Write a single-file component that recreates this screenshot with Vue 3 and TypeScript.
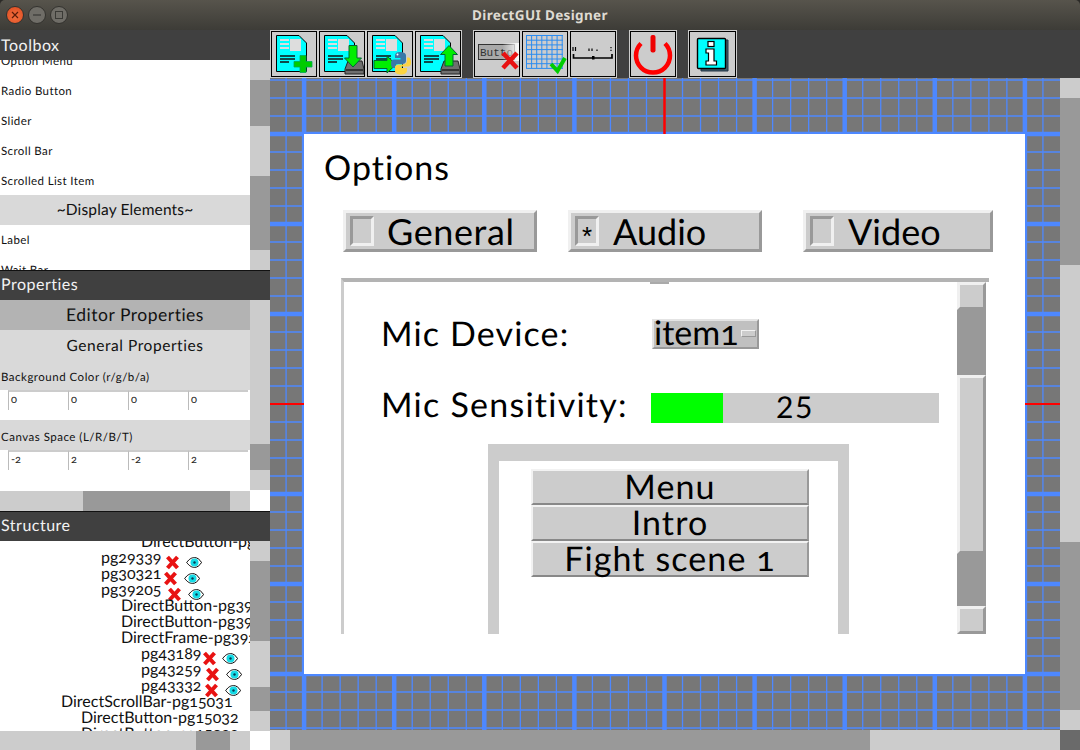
<script setup lang="ts">
const toolboxRows = ['Option Menu', 'Radio Button', 'Slider', 'Scroll Bar', 'Scrolled List Item']
const fields = [
  { label: 'Background Color (r/g/b/a)', values: ['0', '0', '0', '0'] },
  { label: 'Canvas Space (L/R/B/T)', values: ['-2', '2', '-2', '2'] },
]
interface TreeRow { indent: number; name: string; nameW?: number; eyeGap?: number }
const tree: TreeRow[] = [
  { indent: 141, name: 'DirectButton-pg29338' },
  { indent: 101, name: 'pg29339', nameW: 64, eyeGap: 6 },
  { indent: 101, name: 'pg30321', nameW: 62, eyeGap: 6 },
  { indent: 101, name: 'pg39205', nameW: 66, eyeGap: 6 },
  { indent: 121, name: 'DirectButton-pg39206' },
  { indent: 121, name: 'DirectButton-pg39207' },
  { indent: 121, name: 'DirectFrame-pg39208' },
  { indent: 141, name: 'pg43189', nameW: 61, eyeGap: 5 },
  { indent: 141, name: 'pg43259', nameW: 64, eyeGap: 6 },
  { indent: 141, name: 'pg43332', nameW: 63, eyeGap: 6 },
  { indent: 61, name: 'DirectScrollBar-pg15031' },
  { indent: 81, name: 'DirectButton-pg15032' },
  { indent: 81, name: 'DirectButton-pg15033' },
]
const seg = (list: [number, string][]) => list.map(([size, tone]) => ({ size, tone }))
const toolboxV = seg([[20, 'l'], [46, 'd'], [50, 'l'], [74, 'd'], [20, 'l'], [30, 'l']])
const propsV = seg([[144, 'l'], [26, 'd'], [20, 'l']])
const propsH = seg([[83, 'l'], [147, 'd'], [20, 'l']])
const structV = seg([[20, 'l'], [80, 'd'], [46, 'l'], [24, 'd'], [20, 'l']])
const structH = seg([[196, 'l'], [34, 'd'], [20, 'l']])
const canvasV = seg([[20, 'l'], [167, 'd'], [277, 'l'], [168, 'd'], [20, 'l']])
const canvasH = seg([[20, 'l'], [580, 'd'], [190, 'l']])

const CX = 394.5
const CY = 326
const STEP_X = 90.1 / 5
const STEP_Y = 18
const vLines: { x: number; major: boolean }[] = []
const hLines: { y: number; major: boolean }[] = []
for (let i = -30; i <= 30; i++) {
  const x = CX + i * STEP_X
  if (x >= 0 && x <= 790 && i !== 0) vLines.push({ x, major: i % 5 === 0 })
  const y = CY + i * STEP_Y
  if (y >= 0 && y <= 652 && i !== 0) hLines.push({ y, major: i % 5 === 0 })
}
const gridIcon = Array.from({ length: 8 }, (_, i) => i)
</script>

<template>
  <div class="win">
    <header class="titlebar">
      <div class="lights">
        <span class="light close"><svg width="8" height="8" viewBox="0 0 8 8"><path d="M1 1 7 7M7 1 1 7" stroke="#5b1c08" stroke-width="1.2" /></svg></span>
        <span class="light"><svg width="8" height="8" viewBox="0 0 8 8"><path d="M0 4H8" stroke="#3a3a36" stroke-width="1.2" /></svg></span>
        <span class="light"><svg width="8" height="8" viewBox="0 0 8 8"><rect x=".5" y=".5" width="7" height="7" fill="none" stroke="#3a3a36" /></svg></span>
      </div>
      <div class="title">DirectGUI Designer</div>
    </header>

    <div class="body">
      <aside class="left">
        <section class="panel">
          <div class="phead">Toolbox</div>
          <div class="pmain">
            <div class="plist toolbox">
              <div v-for="r in toolboxRows" :key="r" class="tbrow">{{ r }}</div>
              <div class="section">~Display Elements~</div>
              <div class="tbrow">Label</div>
              <div class="tbrow">Wait Bar</div>
            </div>
            <div class="vbar">
              <div v-for="(s, i) in toolboxV" :key="i" :class="s.tone" :style="{ height: s.size + 'px' }"></div>
            </div>
          </div>
        </section>

        <section class="panel props">
          <div class="phead">Properties</div>
          <div class="pmain">
            <div class="plist">
              <div class="editor">Editor Properties</div>
              <div class="general">General Properties</div>
              <div v-for="f in fields" :key="f.label" class="field">
                <div class="flabel">{{ f.label }}</div>
                <div class="inputs">
                  <div v-for="(v, i) in f.values" :key="i" class="input">{{ v }}</div>
                </div>
              </div>
            </div>
            <div class="vbar">
              <div v-for="(s, i) in propsV" :key="i" :class="s.tone" :style="{ height: s.size + 'px' }"></div>
            </div>
          </div>
          <div class="hrow">
            <div class="hbar">
              <div v-for="(s, i) in propsH" :key="i" :class="s.tone" :style="{ width: s.size + 'px' }"></div>
            </div>
          </div>
        </section>

        <section class="panel">
          <div class="phead">Structure</div>
          <div class="pmain">
            <div class="plist tree">
              <div v-for="r in tree" :key="r.name" class="trow" :style="{ paddingLeft: r.indent + 'px' }">
                <span class="tname" :style="r.nameW ? { width: r.nameW + 'px' } : undefined">{{ r.name }}</span>
                <template v-if="r.nameW">
                  <svg class="xicon" width="15" height="15" viewBox="0 0 15 15"><path d="M2.5 2 12.5 13M12.5 2 2.5 13" stroke="#e81212" stroke-width="4" /></svg>
                  <svg class="eye" :style="{ marginLeft: r.eyeGap + 'px' }" width="16" height="11" viewBox="0 0 16 11">
                    <path d="M.7 5.5C3.5 1.6 6 .6 8.5.6c2.600 0 5 1.500 7 4.900-2 3.300-4.400 4.900-7 4.900-2.500 0-5-1.200-7.800-4.900Z" fill="#fff" stroke="#000" stroke-width="1" />
                    <circle cx="8.500" cy="5.500" r="4" fill="#14dbe6" />
                    <circle cx="8.500" cy="5.500" r="1.200" fill="#063a55" />
                  </svg>
                </template>
              </div>
            </div>
            <div class="vbar">
              <div v-for="(s, i) in structV" :key="i" :class="s.tone" :style="{ height: s.size + 'px' }"></div>
            </div>
          </div>
          <div class="hrow">
            <div class="hbar">
              <div v-for="(s, i) in structH" :key="i" :class="s.tone" :style="{ width: s.size + 'px' }"></div>
            </div>
          </div>
        </section>
      </aside>

      <main class="main">
        <div class="toolbar">
          <button class="tool">
            <svg viewBox="0 0 46 46" width="46" height="46">
              <path d="M5.500 4.500H28L35.500 12V40.500H5.500Z" fill="#0ff" stroke="#000" /><path d="M9 9h9M9 13h9M9 17h9" stroke="#ddd" stroke-width="2" /><rect x="19" y="8" width="11" height="12" fill="#ddd" /><path d="M9 25h15M9 28h15M9 31h9" stroke="#111" stroke-width="1.500" />
              <path d="M29 24.500h6v6h6v5.500h-6v5.500h-6V36h-6v-5.500h6Z" fill="#0c0" stroke="#0a5" stroke-width=".8" />
            </svg>
          </button>
          <button class="tool">
            <svg viewBox="0 0 46 46" width="46" height="46">
              <path d="M5.500 4.500H28L35.500 12V40.500H5.500Z" fill="#0ff" stroke="#000" /><path d="M9 9h9M9 13h9M9 17h9" stroke="#ddd" stroke-width="2" /><rect x="19" y="8" width="11" height="12" fill="#ddd" /><path d="M9 25h15M9 28h15M9 31h9" stroke="#111" stroke-width="1.500" />
              <path d="M29 30h14l2 8v5H26v-5Z" fill="#6f6f6f" stroke="#222" /><path d="M27 39h17" stroke="#222" stroke-width="1.500" />
              <path d="M30 14.500h8V27h4.500L34 36 25.500 27H30Z" fill="#0e0" stroke="#063" />
            </svg>
          </button>
          <button class="tool">
            <svg viewBox="0 0 46 46" width="46" height="46">
              <path d="M5.500 4.500H28L35.500 12V40.500H5.500Z" fill="#0ff" stroke="#000" /><path d="M9 9h9M9 13h9M9 17h9" stroke="#ddd" stroke-width="2" /><rect x="19" y="8" width="11" height="12" fill="#ddd" /><path d="M9 25h15M9 28h15M9 31h9" stroke="#111" stroke-width="1.500" />
              <path d="M7 29.500H20V25l9 8.500-9 8.500v-4.500H7Z" fill="#0e0" stroke="#063" />
              <path d="M33 21c4 0 6 1.300 6 3.500V30c0 2-1.700 3-3.500 3H31c-2 0-3 1.300-3 3v1h-2c-1.700-1-2-3-2-4.500 0-2.500 1-4 3-4h6.500V27H28v-2.500c0-2.400 2-3.500 5-3.500Z" fill="#3b78a8" />
              <circle cx="30.500" cy="23.500" r="1" fill="#fff" />
              <path d="M40 26.500h2c1.700 1 2 3 2 5 0 2.500-1 4-3 4h-6.500V37H40v2.500c0 2.500-2.500 4-6 4-3.500 0-6-1.400-6-3.500v-3.500c0-2 1.700-3 3.500-3H36c2 0 4-1.300 4-3.500Z" fill="#fcd340" />
            </svg>
          </button>
          <button class="tool">
            <svg viewBox="0 0 46 46" width="46" height="46">
              <path d="M5.500 4.500H28L35.500 12V40.500H5.500Z" fill="#0ff" stroke="#000" /><path d="M9 9h9M9 13h9M9 17h9" stroke="#ddd" stroke-width="2" /><rect x="19" y="8" width="11" height="12" fill="#ddd" /><path d="M9 25h15M9 28h15M9 31h9" stroke="#111" stroke-width="1.500" />
              <path d="M29 30h14l2 8v5H26v-5Z" fill="#6f6f6f" stroke="#222" /><path d="M27 39h17" stroke="#222" stroke-width="1.500" />
              <path d="M34 14.500 42.500 23.500H38V35H30V23.500H25.500Z" fill="#0e0" stroke="#063" />
            </svg>
          </button>

          <button class="tool gap-a">
            <svg viewBox="0 0 46 46" width="46" height="46">
              <defs><linearGradient id="fade"><stop offset=".45" stop-color="#fff" stop-opacity="0" /><stop offset="1" stop-color="#fff" /></linearGradient></defs>
              <rect x="4.500" y="13.500" width="36" height="15" fill="#a9a9a9" stroke="#333" />
              <text x="6" y="25" class="btn-word">Butto</text>
              <rect x="14" y="12" width="32" height="18" fill="url(#fade)" />
              <path d="M29 22 43 37M43 22 29 37" stroke="#e81212" stroke-width="4.500" />
            </svg>
          </button>
          <button class="tool">
            <svg viewBox="0 0 46 46" width="46" height="46">
              <path v-for="i in gridIcon" :key="'v' + i" :d="`M${4.500 + i * 5.100} 4V37`" stroke="#2a8cf0" stroke-width="1" />
              <path v-for="i in gridIcon" :key="'h' + i" :d="`M4 ${4.500 + i * 4.700}H41`" stroke="#2a8cf0" stroke-width="1" />
              <path d="M29 33 35.500 40 43 27" fill="none" stroke="#0c0" stroke-width="4" />
            </svg>
          </button>
          <button class="tool">
            <svg viewBox="0 0 46 46" width="46" height="46">
              <path d="M3.500 23V27H42V23" fill="none" stroke="#000" stroke-width="1.700" />
              <path d="M3 16V20M5.500 16V20M19 17.500V20M22 17.500V20M27 18.500V20M41 16V17.200M41 18.800V20" fill="none" stroke="#000" stroke-width="1.200" />
              <rect x="22" y="25" width="2.500" height="3.500" fill="#000" />
            </svg>
          </button>

          <button class="tool gap-b">
            <svg viewBox="0 0 46 46" width="46" height="46">
              <path d="M11 12.500A17 17 0 1 0 35 12.500" fill="none" stroke="#f00" stroke-width="4.500" />
              <rect x="20.500" y="4" width="5" height="17.500" rx="2" fill="#e00" />
            </svg>
          </button>
          <button class="tool gap-c">
            <svg viewBox="0 0 47 46" width="47" height="46">
              <path d="M36 9h3v31H12v-3" fill="#3d5a66" stroke="#234" />
              <rect x="8.500" y="7.500" width="28" height="30" rx="1" fill="#0ff" stroke="#000" stroke-width="1.400" />
              <rect x="19" y="10.500" width="6" height="5" fill="#fff" stroke="#000" stroke-width="1.200" />
              <path d="M17 18h8v12h2.500v4H17v-4h2.500v-8H17Z" fill="#fff" stroke="#000" stroke-width="1.200" />
            </svg>
          </button>
        </div>

        <div class="workspace">
          <div class="stage-row">
            <div class="canvas">
              <svg class="grid" width="790" height="652" viewBox="0 0 790 652">
                <line v-for="l in vLines" :key="'v' + l.x" :x1="l.x" :x2="l.x" y1="0" y2="652" stroke="#4d88ff" :stroke-width="l.major ? 4.500 : 1.300" />
                <line v-for="l in hLines" :key="'h' + l.y" x1="0" x2="790" :y1="l.y" :y2="l.y" stroke="#4d88ff" :stroke-width="l.major ? 4.500 : 1.300" />
                <line :x1="CX" :x2="CX" y1="0" y2="56" stroke="#f00" stroke-width="2.500" />
                <line :x1="CX" :x2="CX" y1="596" y2="652" stroke="#4d88ff" stroke-width="4.500" />
                <line x1="0" x2="790" :y1="CY" :y2="CY" stroke="#f00" stroke-width="2" />
              </svg>

              <div class="frame">
                <div class="options">Options</div>
                <div class="tab tab-general"><span class="radio"></span><span class="gen">General</span></div>
                <div class="tab tab-audio"><span class="radio on">*</span><span>Audio</span></div>
                <div class="tab tab-video"><span class="radio"></span><span>Video</span></div>

                <div class="scroller">
                  <div class="nub"></div>
                  <div class="mic mic-device">Mic Device:</div>
                  <div class="optmenu">item1<span class="optind"></span></div>
                  <div class="mic mic-sens">Mic Sensitivity:</div>
                  <div class="meter"><div class="meter-fill"></div><span class="meter-val">25</span></div>

                  <div class="inner">
                    <div class="list">
                      <div class="lbtn">Menu</div>
                      <div class="lbtn">Intro</div>
                      <div class="lbtn">Fight scene 1</div>
                    </div>
                  </div>

                  <div class="sb">
                    <div class="sb-btn"></div>
                    <div class="sb-track t1"></div>
                    <div class="sb-btn thumb"></div>
                    <div class="sb-track t2"></div>
                    <div class="sb-btn"></div>
                  </div>
                </div>
              </div>
            </div>
            <div class="vbar">
              <div v-for="(s, i) in canvasV" :key="i" :class="s.tone" :style="{ height: s.size + 'px' }"></div>
            </div>
          </div>
          <div class="bottom-row">
            <div class="hbar">
              <div v-for="(s, i) in canvasH" :key="i" :class="s.tone" :style="{ width: s.size + 'px' }"></div>
            </div>
            <div class="corner"></div>
          </div>
        </div>
      </main>
    </div>
  </div>
</template>

<style>
html, body { margin: 0; background: #2b2a27; overflow: hidden; }
</style>

<style scoped>
.win {
  width: 1080px; height: 750px; display: flex; flex-direction: column; overflow: hidden;
  font-family: Lato, "Noto Sans", sans-serif; color: #111;
  font-variant-numeric: oldstyle-nums; text-rendering: geometricPrecision;
}
.titlebar {
  height: 30px; flex: none; display: flex; align-items: center; position: relative;
  background: linear-gradient(#57544c, #3d3c37); border-radius: 5px 5px 0 0;
}
.lights { display: flex; gap: 4px; padding-left: 6px; }
.light {
  width: 16px; height: 16px; border-radius: 50%; display: flex; align-items: center; justify-content: center;
  background: #6f6d67; border: 1px solid #33322e;
}
.light.close { background: radial-gradient(circle at 50% 60%, #f2703f, #dd4a1f); }
.title {
  position: absolute; left: 0; right: 0; text-align: center;
  font: 700 13.500px "Noto Sans", sans-serif; color: #dfdbd2; letter-spacing: .35px;
}
.body { flex: 1; display: flex; min-height: 0; }
.left { width: 270px; flex: none; display: flex; flex-direction: column; background: #fff; }
.panel { height: 240px; flex: none; display: flex; flex-direction: column; overflow: hidden; }
.props { height: 241px; }
.phead {
  height: 30px; flex: none; box-sizing: border-box; background: #404040; color: #f2f2f2;
  font-size: 16px; line-height: 28px; padding-left: 1px; border-top: 1px solid #111; letter-spacing: .5px;
}
.panel:first-child .phead { border-top: none; line-height: 32px; }
.pmain { flex: 1; display: flex; min-height: 0; position: relative; }
.plist { width: 250px; flex: none; overflow: hidden; background: #fff; }
.vbar { width: 20px; flex: none; display: flex; flex-direction: column; overflow: hidden; }
.hrow { display: flex; height: 20px; flex: none; }
.hbar { display: flex; height: 20px; flex: 1; }
.l { background: #ccc; flex: none; }
.d { background: #999; flex: none; }
.tbrow { height: 30px; line-height: 32px; font-size: 11.500px; padding-left: 1px; white-space: nowrap; letter-spacing: .4px; }
.toolbox .tbrow:first-child { margin-top: -14px; }
.section { height: 30px; margin-top: -1px; background: #d9d9d9; text-align: center; line-height: 31px; font-size: 15.500px; letter-spacing: .15px; }
.editor, .general { height: 30px; line-height: 30px; text-align: center; padding-left: 20px; white-space: nowrap; }
.editor { background: #b3b3b3; font-size: 17.500px; letter-spacing: .5px; line-height: 29px; }
.general { background: #d9d9d9; font-size: 15.500px; letter-spacing: .55px; line-height: 32px; }
.field { height: 60px; }
.flabel { height: 30px; line-height: 35px; background: #d9d9d9; font-size: 11.500px; padding-left: 1px; white-space: nowrap; letter-spacing: .5px; }
.inputs { display: flex; padding-left: 8px; height: 30px; }
.input {
  width: 59px; height: 18px; box-sizing: content-box; border-top: 2px solid #ccc; border-left: 1px solid #bbb;
  font-size: 11px; line-height: 16px; text-indent: 2px; color: #222;
}
.trow { height: 16px; display: flex; align-items: flex-start; font-size: 16px; line-height: 16px; white-space: nowrap; }
.trow:first-child { margin-top: -7px; }
.tname { flex: none; display: block; }
.xicon { flex: none; margin-top: 5px; }
.eye { flex: none; margin-top: 7px; }

.main { width: 810px; flex: none; display: flex; flex-direction: column; }
.toolbar { height: 48px; flex: none; display: flex; background: #404040; }
.tool {
  width: 48px; height: 48px; flex: none; padding: 0; margin: 0; box-sizing: border-box;
  background: #ccc; border: 1px solid #ccc; position: relative;
  display: flex; align-items: center; justify-content: center;
}
.tool::after { content: ""; position: absolute; inset: 0; border: 1px solid #000; pointer-events: none; }
.tool svg { display: block; flex: none; }
.gap-a { margin-left: 11px; }
.gap-b { margin-left: 12px; }
.gap-c { margin-left: 11px; width: 49px; }
.btn-word { font-size: 11px; fill: #333; font-family: "Liberation Mono", monospace; }

.workspace { flex: 1; display: flex; flex-direction: column; min-height: 0; }
.stage-row { height: 652px; display: flex; flex: none; }
.canvas { width: 790px; height: 652px; flex: none; position: relative; background: #777; overflow: hidden; }
.grid { position: absolute; inset: 0; display: block; }
.bottom-row { display: flex; height: 20px; flex: none; }
.corner { width: 20px; height: 20px; flex: none; background: #6a6a6a; }

.frame { position: absolute; left: 34px; top: 56px; width: 721px; height: 540px; background: #fff; color: #000; }
.options { position: absolute; left: 20px; top: 12px; font-size: 34px; line-height: 44px; white-space: nowrap; letter-spacing: 1px; }
.tab {
  position: absolute; top: 76px; height: 42px; box-sizing: border-box; background: #ccc;
  border: 3px solid; border-color: #f0f0f0 #999 #999 #f0f0f0;
  display: flex; align-items: center; font-size: 36px; line-height: 30px; white-space: nowrap;
}
.tab-general { left: 39px; width: 194px; }
.tab-audio { left: 264px; width: 194px; }
.tab-video { left: 499px; width: 190px; }
.gen { letter-spacing: .6px; margin-left: -1px; }
.radio {
  width: 24px; height: 30px; box-sizing: border-box; flex: none; margin: 0 14px 0 4px;
  background: #ccc; border: 3px solid; border-color: #999 #f0f0f0 #f0f0f0 #999;
  font: 400 26px/34px "Liberation Sans", sans-serif; text-align: center;
}
.scroller {
  position: absolute; left: 37px; top: 144px; width: 648px; height: 356px; box-sizing: border-box;
  border-top: 4px solid #b3b3b3; border-left: 3px solid #ccc;
}
.nub { position: absolute; left: 306px; top: 0; width: 19px; height: 2px; background: #aaa; }
.mic { position: absolute; left: 37px; font-size: 34px; line-height: 40px; white-space: nowrap; letter-spacing: 1.150px; }
.mic-device { top: 32px; }
.mic-sens { top: 103px; letter-spacing: 1.250px; }
.optmenu {
  position: absolute; left: 308px; top: 37px; width: 107px; height: 30px; box-sizing: border-box;
  background: #c0c0c0; border: 2px solid; border-color: #e4e4e4 #999 #999 #e4e4e4;
  font-size: 34px; line-height: 24px; white-space: nowrap;
}
.optind {
  position: absolute; right: 1px; top: 9px; width: 15px; height: 7px; box-sizing: border-box;
  background: #ccc; border: 1px solid; border-color: #f2f2f2 #999 #999 #f2f2f2;
}
.meter { position: absolute; left: 307px; top: 111px; width: 288px; height: 30px; background: #ccc; }
.meter-fill { width: 72px; height: 100%; background: #0f0; }
.meter-val {
  position: absolute; inset: 0; text-align: center; line-height: 28px; font-size: 30px; letter-spacing: 1.500px;
  font-variant-numeric: lining-nums;
}
.inner {
  position: absolute; left: 144px; top: 162px; width: 361px; height: 190px; box-sizing: border-box;
  border: 17px solid #ccc; border-width: 17px 11px 0; background: #fff;
}
.list { padding: 8px 0 0 32px; }
.lbtn {
  width: 278px; box-sizing: border-box; height: 36px; background: #ccc; text-align: center;
  border: 2px solid; border-color: #f2f2f2 #999 #888 #f2f2f2;
  font-size: 34px; line-height: 32px; white-space: nowrap; letter-spacing: 1.100px;
}
.sb { position: absolute; left: 613px; top: 0; width: 29px; height: 352px; display: flex; flex-direction: column; }
.sb-btn {
  height: 28px; flex: none; box-sizing: border-box; background: #ccc;
  border: 3px solid; border-color: #f0f0f0 #999 #999 #f0f0f0;
}
.sb-btn.thumb { height: 179px; }
.sb-track { background: #999; flex: none; }
.t1 { height: 65px; }
.t2 { height: 52px; }
</style>
